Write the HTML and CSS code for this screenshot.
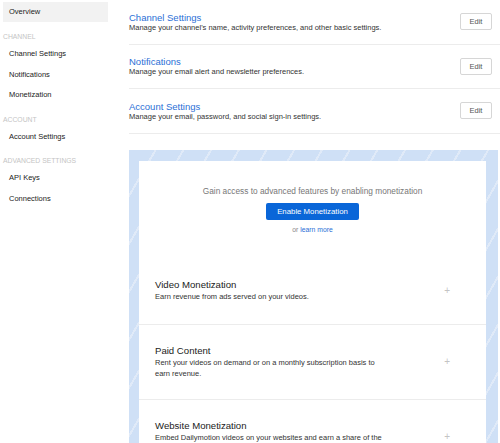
FILE: index.html
```html
<!DOCTYPE html>
<html>
<head>
  <meta charset="UTF-8">
  <title>Settings</title>
  <link rel="stylesheet" href="styles.css">
</head>
<body>
  <div class="layout">
    <nav class="sidebar">
      <a class="nav-item active" href="#">Overview</a>
      <div class="nav-heading">CHANNEL</div>
      <a class="nav-item" href="#">Channel Settings</a>
      <a class="nav-item" href="#">Notifications</a>
      <a class="nav-item" href="#">Monetization</a>
      <div class="nav-heading">ACCOUNT</div>
      <a class="nav-item" href="#">Account Settings</a>
      <div class="nav-heading">ADVANCED SETTINGS</div>
      <a class="nav-item" href="#">API Keys</a>
      <a class="nav-item" href="#">Connections</a>
    </nav>

    <main class="main">
      <div class="setting-row">
        <div class="setting-text">
          <a class="setting-title" href="#">Channel Settings</a>
          <div class="setting-desc">Manage your channel's name, activity preferences, and other basic settings.</div>
        </div>
        <button class="edit-btn">Edit</button>
      </div>
      <div class="setting-row">
        <div class="setting-text">
          <a class="setting-title" href="#">Notifications</a>
          <div class="setting-desc">Manage your email alert and newsletter preferences.</div>
        </div>
        <button class="edit-btn">Edit</button>
      </div>
      <div class="setting-row">
        <div class="setting-text">
          <a class="setting-title" href="#">Account Settings</a>
          <div class="setting-desc">Manage your email, password, and social sign-in settings.</div>
        </div>
        <button class="edit-btn">Edit</button>
      </div>

      <div class="promo">
        <div class="promo-inner">
          <div class="promo-intro">
            <p class="promo-lead">Gain access to advanced features by enabling monetization</p>
            <button class="primary-btn">Enable Monetization</button>
            <p class="promo-more">or <a href="#">learn more</a></p>
          </div>

          <div class="feature">
            <div class="feature-text">
              <div class="feature-title">Video Monetization</div>
              <div class="feature-desc">Earn revenue from ads served on your videos.</div>
            </div>
            <span class="feature-plus">+</span>
          </div>
          <div class="feature">
            <div class="feature-text">
              <div class="feature-title">Paid Content</div>
              <div class="feature-desc">Rent your videos on demand or on a monthly subscription basis to earn revenue.</div>
            </div>
            <span class="feature-plus">+</span>
          </div>
          <div class="feature">
            <div class="feature-text">
              <div class="feature-title">Website Monetization</div>
              <div class="feature-desc">Embed Dailymotion videos on your websites and earn a share of the revenue.</div>
            </div>
            <span class="feature-plus">+</span>
          </div>
        </div>
      </div>
    </main>
  </div>
</body>
</html>
```

FILE: styles.css
```css
body {
  margin: 0;
  background: #fff;
  font-family: "Liberation Sans", Arial, sans-serif;
  color: #222;
  overflow: hidden;
}
a {
  text-decoration: none;
}
.layout {
  display: flex;
  height: 443px;
}
.sidebar {
  width: 105px;
  padding: 2px 3px;
  display: flex;
  flex-direction: column;
  flex-shrink: 0;
}
.nav-item {
  height: 20.5px;
  line-height: 21px;
  padding-left: 6px;
  font-size: 7.5px;
  color: #222;
}
.nav-item.active {
  background: #f2f2f2;
  height: 20px;
  line-height: 20px;
}
.nav-heading {
  padding: 10px 0 2px;
  line-height: 9px;
  font-size: 6.8px;
  color: #c4c4c4;
}
.main {
  flex: 1;
  padding-left: 18px;
}
.setting-row {
  display: flex;
  align-items: center;
  justify-content: space-between;
  height: 43.5px;
  border-bottom: 1px solid #ececec;
  padding-right: 8px;
}
.setting-text {
  padding-top: 1px;
}
.setting-title {
  display: block;
  font-size: 9.5px;
  line-height: 11px;
  color: #2b6fd6;
}
.setting-desc {
  font-size: 7.5px;
  line-height: 10px;
  color: #333;
}
.edit-btn {
  width: 32px;
  height: 17px;
  padding: 0;
  background: #fff;
  border: 1px solid #d6d6d6;
  border-radius: 2px;
  font-family: inherit;
  font-size: 7.5px;
  color: #555;
}
.promo {
  margin: 16px 2px 0 0;
  padding: 11px 12px 0 10px;
  background-color: #cfe0f6;
  background-image: repeating-linear-gradient(120deg, #cfe0f6 0, #cfe0f6 22px, #e0eaf8 22px, #e0eaf8 24px);
}
.promo-inner {
  background: #fff;
  height: 300px;
}
.promo-intro {
  height: 96px;
  padding-top: 25px;
  box-sizing: border-box;
  text-align: center;
}
.promo-lead {
  margin: 0;
  font-size: 8.3px;
  line-height: 10px;
  color: #777;
}
.primary-btn {
  margin-top: 7px;
  width: 93px;
  height: 17px;
  padding: 0;
  background: #0a66d8;
  border: none;
  border-radius: 2px;
  font-family: inherit;
  font-size: 7.8px;
  color: #fff;
}
.promo-more {
  margin: 5px 0 0;
  font-size: 6.8px;
  line-height: 10px;
  color: #888;
}
.promo-more a {
  color: #2b6fd6;
}
.feature {
  display: flex;
  align-items: center;
  justify-content: space-between;
  min-height: 68px;
  padding: 20px 36px 20px 16px;
  box-sizing: border-box;
  border-bottom: 1px solid #ececec;
}
.feature:first-of-type {
  padding-top: 18px;
  padding-bottom: 25px;
}
.feature-text {
  width: 228px;
}
.feature-title {
  font-size: 9.6px;
  line-height: 12px;
  color: #222;
}
.feature-desc {
  font-size: 7.5px;
  line-height: 11px;
  color: #333;
}
.feature-plus {
  font-size: 10px;
  color: #c4c4c4;
}
```
